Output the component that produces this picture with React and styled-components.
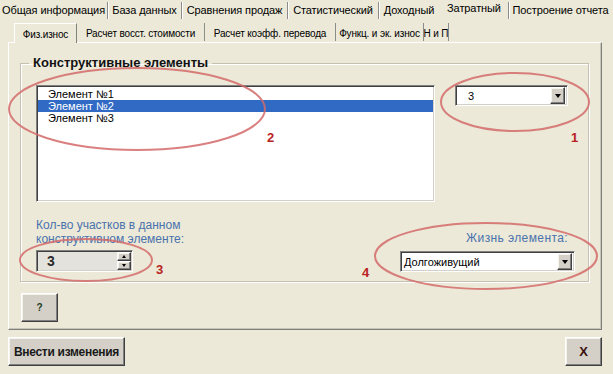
import React from 'react';
import styled, { createGlobalStyle, css } from 'styled-components';

const Global = createGlobalStyle`
  html, body { margin: 0; padding: 0; background: #ece9d8; }
  body { font-family: "Liberation Sans", Arial, sans-serif; color: #000; }
  * { box-sizing: border-box; }
`;

const sunken = css`
  border: 1px solid;
  border-color: #808080 #ffffff #ffffff #808080;
  box-shadow: inset 1px 1px 0 #404040, inset -1px -1px 0 #d4d0c8;
`;

const raised = css`
  border: 1px solid;
  border-color: #ffffff #404040 #404040 #ffffff;
  box-shadow: inset -1px -1px 0 #808080, inset 1px 1px 0 #f4f3ee;
  background: #d4d0c8;
`;

const Page = styled.div`
  position: relative;
  width: 613px;
  height: 374px;
  display: flex;
  flex-direction: column;
  background: #ece9d8;
  overflow: hidden;
`;

const TopTabs = styled.div`
  display: flex;
  height: 20px;
`;

const TopTab = styled.div`
  width: ${p => p.$w}px;
  flex: none;
  display: flex;
  align-items: center;
  justify-content: center;
  font-size: 11px;
  letter-spacing: -0.1px;
  white-space: nowrap;
  padding-bottom: ${p => (p.$active ? 5 : 1)}px;
  border-right: ${p => (p.$sep ? '1px solid #8c8c8c' : '1px solid transparent')};
  box-shadow: ${p => (p.$sep ? '1px 0 0 #ffffff' : 'none')};
  margin: 2px 0 1px;
`;

const TabArea = styled.div`
  padding: 0 11px 0 8px;
  display: flex;
  flex-direction: column;
`;

const InnerTabs = styled.div`
  display: flex;
  align-items: flex-end;
  height: 22px;
  padding-left: 6px;
  position: relative;
  z-index: 1;
`;

const InnerTab = styled.div`
  width: ${p => p.$w}px;
  flex: none;
  display: flex;
  align-items: center;
  justify-content: center;
  font-size: 10px;
  letter-spacing: -0.15px;
  white-space: nowrap;
  ${p =>
    p.$active
      ? css`
          height: 20px;
          margin-bottom: -1px;
          border-left: 1px solid #ffffff;
          border-top: 1px solid #ffffff;
          border-right: 1px solid #808080;
          background: #ece9d8;
          padding-top: 1px;
        `
      : css`
          height: 18px;
          margin-bottom: 1px;
          border-right: 1px solid #8c8c8c;
          padding-top: 3px;
        `}
`;

const Panel = styled.div`
  height: 288px;
  border-left: 1px solid #ffffff;
  border-top: 1px solid #ffffff;
  border-right: 1px solid #7f7f7f;
  border-bottom: 1px solid #7f7f7f;
  box-shadow: inset -1px -1px 0 #c9c6b6;
  padding: 12px 0 0 11px;
  display: flex;
  flex-direction: column;
`;

const GroupBox = styled.fieldset`
  margin: 0;
  width: 569px;
  height: 227px;
  border: 1px solid #c4c1b2;
  box-shadow: inset 1px 1px 0 #ffffff, 1px 1px 0 #ffffff;
  padding: 0 13px 9px 15px;
`;

const Legend = styled.legend`
  margin-left: -7px;
  padding: 0 4px;
  font-size: 13px;
  font-weight: bold;
  line-height: 16px;
  color: #111;
`;

const GroupBody = styled.div`
  height: 201px;
  display: flex;
  flex-direction: column;
`;

const TopRow = styled.div`
  display: flex;
  align-items: flex-start;
  gap: 20px;
  margin-top: 14px;
`;

const ListBox = styled.div`
  ${sunken};
  background: #ffffff;
  width: 399px;
  height: 117px;
  padding: 2px 1px;
  display: flex;
  flex-direction: column;
`;

const ListItem = styled.div`
  height: 12px;
  line-height: 12px;
  font-size: 11px;
  padding-left: 10px;
  background: ${p => (p.$selected ? '#316ac5' : 'transparent')};
  color: ${p => (p.$selected ? '#ffffff' : '#000000')};
`;

const Combo = styled.div`
  ${sunken};
  background: #ffffff;
  width: ${p => p.$w}px;
  height: 21px;
  display: flex;
  align-items: center;
  justify-content: space-between;
  padding: 2px 2px 2px ${p => p.$pad}px;
  font-size: 11px;
  margin-right: ${p => p.$mr || 0}px;
`;

const ArrowBtn = styled.div`
  ${raised};
  width: 15px;
  height: 17px;
  display: flex;
  align-items: center;
  justify-content: center;
  flex: none;
`;

const Arrow = styled.span`
  width: 0;
  height: 0;
  border-left: 3.5px solid transparent;
  border-right: 3.5px solid transparent;
  border-top: 4px solid #000;
`;

const BottomRow = styled.div`
  display: flex;
  justify-content: space-between;
  align-items: flex-end;
  flex: 1;
`;

const LeftBlock = styled.div`
  display: flex;
  flex-direction: column;
  gap: 4px;
`;

const RightBlock = styled.div`
  display: flex;
  flex-direction: column;
  align-items: flex-end;
  gap: 6px;
`;

const BlueLabel = styled.div`
  font-size: 12px;
  line-height: 14px;
  color: #4a72ad;
  letter-spacing: ${p => p.$ls || 0}px;
  margin-right: ${p => p.$mr || 0}px;
`;

const Spin = styled.div`
  ${sunken};
  width: 97px;
  height: 22px;
  background: #e3e2dd;
  display: flex;
  align-items: center;
  justify-content: space-between;
  padding: 2px 0 2px 10px;
  font-size: 14px;
  font-weight: bold;
  color: #2a2a2a;
`;

const SpinButtons = styled.div`
  display: flex;
  flex-direction: column;
  width: 14px;
  height: 18px;
  margin-right: 1px;
`;

const SpinBtn = styled.div`
  ${raised};
  flex: 1;
  display: flex;
  align-items: center;
  justify-content: center;
`;

const SmallArrow = styled.span`
  width: 0;
  height: 0;
  border-left: 2.5px solid transparent;
  border-right: 2.5px solid transparent;
  ${p => (p.$up ? 'border-bottom: 3px solid #000;' : 'border-top: 3px solid #000;')}
`;

const Button = styled.button`
  ${raised};
  width: ${p => p.$w}px;
  height: ${p => p.$h}px;
  font-family: "Liberation Sans", Arial, sans-serif;
  font-weight: bold;
  font-size: ${p => p.$fs}px;
  color: ${p => p.$color || '#1a1a1a'};
  padding: 0;
  margin: 0;
  display: flex;
  align-items: center;
  justify-content: center;
  white-space: nowrap;
  letter-spacing: ${p => p.$ls || 0}px;
`;

const HelpRow = styled.div`
  margin-top: 11px;
  padding-left: 1px;
`;

const BottomBar = styled.div`
  display: flex;
  justify-content: space-between;
  padding: 7px 11px 0 8px;
`;

const Overlay = styled.svg`
  position: absolute;
  left: 0;
  top: 0;
  pointer-events: none;
`;

const Mark = styled.span`
  position: absolute;
  left: ${p => p.$x}px;
  top: ${p => p.$y}px;
  font-size: 13px;
  font-weight: bold;
  line-height: 13px;
  color: #b8231f;
  font-family: "Liberation Sans", Arial, sans-serif;
`;

const topTabs = [
  { label: 'Общая информация', w: 108, sep: true },
  { label: 'База данных', w: 74, sep: true },
  { label: 'Сравнения продаж', w: 106, sep: true },
  { label: 'Статистический', w: 91, sep: true },
  { label: 'Доходный', w: 61 },
  { label: 'Затратный', w: 69, active: true, sep: true },
  { label: 'Построение отчета', w: 104 },
];

const innerTabs = [
  { label: 'Физ.износ', w: 63, active: true },
  { label: 'Расчет восст. стоимости', w: 128 },
  { label: 'Расчет коэфф. перевода', w: 131 },
  { label: 'Функц. и эк. износ', w: 88 },
  { label: 'Н и П', w: 25 },
];

const ellipses = [
  { cx: 515, cy: 102, rx: 74, ry: 29 },
  { cx: 137, cy: 109, rx: 128, ry: 41 },
  { cx: 86, cy: 260, rx: 66, ry: 21 },
  { cx: 486, cy: 256, rx: 111, ry: 33 },
];

const marks = [
  { t: '1', x: 571, y: 131 },
  { t: '2', x: 267, y: 131 },
  { t: '3', x: 156, y: 263 },
  { t: '4', x: 362, y: 266 },
];

export default function App() {
  return (
    <>
      <Global />
      <Page>
        <TopTabs>
          {topTabs.map(t => (
            <TopTab key={t.label} $w={t.w} $active={t.active} $sep={t.sep}>
              {t.label}
            </TopTab>
          ))}
        </TopTabs>
        <TabArea>
          <InnerTabs>
            {innerTabs.map(t => (
              <InnerTab key={t.label} $w={t.w} $active={t.active}>
                {t.label}
              </InnerTab>
            ))}
          </InnerTabs>
          <Panel>
            <GroupBox>
              <Legend>Конструктивные элементы</Legend>
              <GroupBody>
                <TopRow>
                  <ListBox>
                    <ListItem>Элемент №1</ListItem>
                    <ListItem $selected>Элемент №2</ListItem>
                    <ListItem>Элемент №3</ListItem>
                  </ListBox>
                  <Combo $w={113} $pad={12} $mr={7}>
                    <span>3</span>
                    <ArrowBtn><Arrow /></ArrowBtn>
                  </Combo>
                </TopRow>
                <BottomRow>
                  <LeftBlock>
                    <BlueLabel>
                      Кол-во участков в данном
                      <br />
                      конструктивном элементе:
                    </BlueLabel>
                    <Spin>
                      <span>3</span>
                      <SpinButtons>
                        <SpinBtn><SmallArrow $up /></SpinBtn>
                        <SpinBtn><SmallArrow /></SpinBtn>
                      </SpinButtons>
                    </Spin>
                  </LeftBlock>
                  <RightBlock>
                    <BlueLabel $ls={0.4} $mr={7}>Жизнь элемента:</BlueLabel>
                    <Combo $w={175} $pad={3}>
                      <span>Долгоживущий</span>
                      <ArrowBtn><Arrow /></ArrowBtn>
                    </Combo>
                  </RightBlock>
                </BottomRow>
              </GroupBody>
            </GroupBox>
            <HelpRow>
              <Button $w={37} $h={29} $fs={10} $color="#1d3b1d">?</Button>
            </HelpRow>
          </Panel>
        </TabArea>
        <BottomBar>
          <Button $w={117} $h={29} $fs={12} $ls={-0.3}>Внести изменения</Button>
          <Button $w={37} $h={29} $fs={13} $color="#3a1010">X</Button>
        </BottomBar>
        <Overlay width="613" height="374" viewBox="0 0 613 374">
          {ellipses.map((e, i) => (
            <ellipse
              key={i}
              cx={e.cx}
              cy={e.cy}
              rx={e.rx}
              ry={e.ry}
              fill="none"
              stroke="#d46a6a"
              strokeOpacity="0.85"
              strokeWidth="2"
            />
          ))}
        </Overlay>
        {marks.map(m => (
          <Mark key={m.t} $x={m.x} $y={m.y}>{m.t}</Mark>
        ))}
      </Page>
    </>
  );
}
